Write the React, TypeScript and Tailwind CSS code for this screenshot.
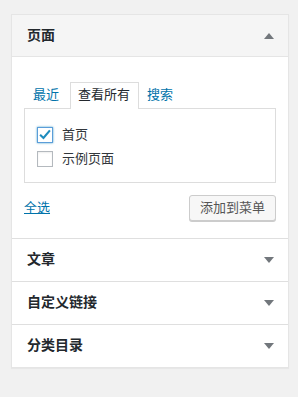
import React from "react";

const font = { fontFamily: '"Liberation Sans", "Noto Sans CJK SC", sans-serif' };

function Tri({ up }: { up?: boolean }) {
  return (
    <svg width="10" height="6" viewBox="0 0 10 6" className="mr-[14px]">
      {up ? <polygon points="5,0 10,6 0,6" fill="#72777c" /> : <polygon points="0,0 10,0 5,6" fill="#72777c" />}
    </svg>
  );
}

function Section({ title }: { title: string }) {
  return (
    <div className="flex h-[43px] items-center justify-between border-t border-[#dfdfdf] bg-white pl-[15px]">
      <span className="text-[14px] font-semibold text-[#23282d]">{title}</span>
      <Tri />
    </div>
  );
}

export default function App() {
  return (
    <div className="min-h-[397px] w-[298px] bg-[#f1f1f1] pt-[14px] pl-[11px]" style={font}>
      <div className="w-[278px] border border-[#e5e5e5] bg-white shadow-[0_1px_1px_rgba(0,0,0,0.04)]">
        <div className="flex h-[42px] items-center justify-between border-b border-[#e5e5e5] bg-[#f5f5f5] pl-[15px]">
          <span className="text-[14px] font-semibold text-[#23282d]">页面</span>
          <Tri up />
        </div>
        <div className="px-[12px] pt-[25px] pb-[17px]">
          <div className="flex items-end pl-[3px] text-[13px]">
            <span className="pl-[6px] pr-[11px] pb-[3px] text-[#0073aa]">最近</span>
            <span className="-mb-px border border-b-0 border-[#ddd] bg-white pl-[7px] pr-[8px] pt-[2px] pb-[4px] text-[#23282d]">查看所有</span>
            <span className="px-[8px] pb-[3px] text-[#0073aa]">搜索</span>
          </div>
          <div className="flex h-[75px] flex-col gap-[8px] border border-[#ddd] px-[12px] pt-[18px]">
            <label className="flex h-[16px] items-center gap-[9px] text-[13px] leading-none text-[#32373c]">
              <span className="flex h-[16px] w-[16px] items-center justify-center border border-[#5b9dd9] shadow-[0_0_2px_rgba(30,140,190,0.8)]">
                <svg width="15" height="15" viewBox="0 0 20 20">
                  <path d="M3 10.5 L7.8 15 L17 4" fill="none" stroke="#1e8cbe" strokeWidth="3" />
                </svg>
              </span>
              首页
            </label>
            <label className="flex h-[16px] items-center gap-[9px] text-[13px] leading-none text-[#32373c]">
              <span className="h-[16px] w-[16px] border border-[#b4b9be] shadow-[inset_0_1px_2px_rgba(0,0,0,0.07)]" />
              示例页面
            </label>
          </div>
          <div className="mt-[12px] flex items-center justify-between">
            <span className="text-[13px] text-[#0073aa] underline">全选</span>
            <span className="flex h-[26px] items-center rounded-[3px] border border-[#ccc] bg-[#f7f7f7] px-[10px] text-[13px] text-[#555] shadow-[0_1px_0_#ccc]">添加到菜单</span>
          </div>
        </div>
        <Section title="文章" />
        <Section title="自定义链接" />
        <Section title="分类目录" />
      </div>
    </div>
  );
}
